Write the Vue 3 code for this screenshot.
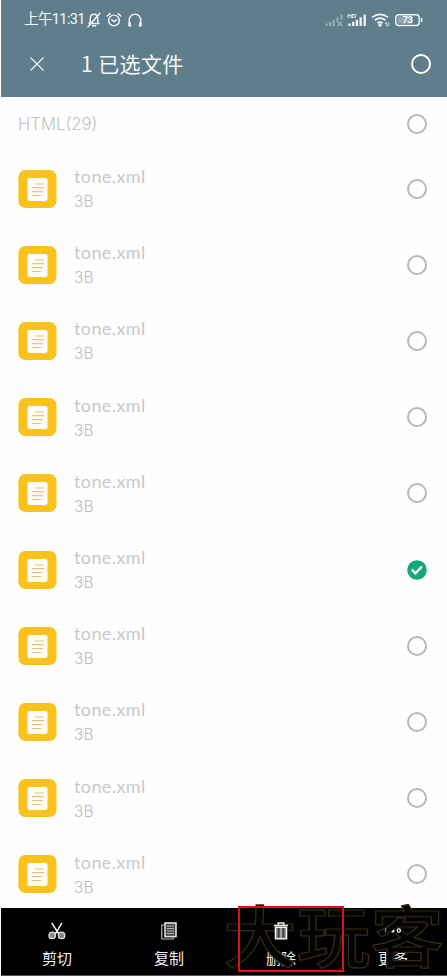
<script setup>
const files = Array.from({ length: 10 }, (_, i) => ({ name: 'tone.xml', size: '3B', checked: i === 5 }))
</script>

<template>
  <main class="screen">
    <header class="top">
      <div class="status">
        <span class="time">上午11:31</span>
        <svg class="bell" width="14" height="16" viewBox="0 0 14 16">
          <path d="M2 11.5h10L10.7 9.7V6.2Q10.7 2.2 7 2.2T3.3 6.2v3.5zM5.3 13.7h3.4M13 1.2 1 14.8" />
        </svg>
        <svg class="alarm" width="16" height="16" viewBox="0 0 16 16">
          <circle cx="8" cy="8.5" r="5.4" /><path d="M5.7 7.8 8 9.6l2.6-1.8M1.2 4 4 1.6M14.8 4 12 1.6" />
        </svg>
        <svg class="phones" width="16" height="16" viewBox="0 0 16 16">
          <path d="M3.8 13.7H2.2V8a5.8 5.8 0 0 1 11.6 0v5.7h-1.6" /><path class="thick" d="M2.7 10.7v2.8M13.3 10.7v2.8" />
        </svg>
        <svg class="signals" width="100" height="16" viewBox="0 0 100 16">
          <g class="dim">
            <path d="M1.5 11.4V14M5 9.8V14M8.7 7.8V14M12.4 5.4v4M16.5 2.8v5" />
            <path class="thin" d="m12.3 9.5 5 4.7m0-4.7-5 4.7" />
          </g>
          <text x="22.2" y="6.4">HD</text>
          <path class="bars" d="M24.5 11.4V14M28.2 9.7V14M31.9 7.8V14M35.6 5.3V14M39.7 2.5V14" />
          <path class="wifi" d="M47.1 5.4q8-6 16 0M49.8 8.2q5.3-4 10.6 0M52.5 11q2.6-1.9 5.2 0" />
          <circle cx="55" cy="13" r="1" fill="#eff5f7" />
          <path class="arrows" d="m59.8 11.5 2-1v3.4m2-3.2v2.7l-2.2.7" />
          <rect x="70.8" y="2.7" width="23.4" height="10.8" rx="3" />
          <rect class="charge" x="72.5" y="4.5" width="15.5" height="7.3" rx="1" />
          <text class="percent" x="77.4" y="11.2">73</text>
          <path class="tip" d="M96.6 6v4" />
        </svg>
      </div>
      <div class="heading">
        <svg class="close" width="16" height="16" viewBox="0 0 16 16"><path d="m1.5 1.5 13 13m0-13-13 13" /></svg>
        <h1>1 已选文件</h1>
        <i class="ring light"></i>
      </div>
    </header>

    <section class="list">
      <div class="group"><span>HTML(29)</span><i class="ring"></i></div>
      <article v-for="(file, i) in files" :key="i" class="file">
        <svg class="doc" width="39" height="38" viewBox="0 0 39 38">
          <rect x=".4" width="38.1" height="38" rx="7" fill="#f9c21c" />
          <rect x="9.5" y="8" width="20" height="23" rx="2.2" fill="#fffefa" />
          <path d="M16.5 14H26M13.7 17.7H26M13.7 21.7H25M13.7 25.5h9.8" />
        </svg>
        <div class="info"><div class="name">{{ file.name }}</div><div class="size">{{ file.size }}</div></div>
        <svg v-if="file.checked" class="check" width="20" height="20" viewBox="0 0 20 20">
          <circle cx="10" cy="10" r="9.8" /><path d="m4.8 9.6 3.6 3.7 6.5-6.6" />
        </svg>
        <i v-else class="ring"></i>
      </article>
    </section>

    <footer class="actions">
      <div class="action">
        <svg width="18" height="18" viewBox="0 0 18 18">
          <path d="M3.7 .8 10.8 12M14 .8 7.2 12" stroke="#f2f2f2" stroke-width="1.5" />
          <circle cx="4.2" cy="13.4" r="3.2" fill="#888" stroke="#ddd" stroke-width="1.3" />
          <circle cx="13.6" cy="13.4" r="3.2" fill="#888" stroke="#ddd" stroke-width="1.3" />
        </svg>
        <span>剪切</span>
      </div>
      <div class="action">
        <svg width="18" height="18" viewBox="0 0 18 18" fill="none">
          <path d="M4 3H1.8v14h11.5v-1.6" stroke="#bbb" stroke-width="1.2" />
          <rect x="5" y="1" width="11" height="13.6" fill="#454545" stroke="#e2e2e2" stroke-width="1.6" />
          <path d="M7 4h7M7 6.5h7M7 9h7M7 11.5h7" stroke="#bbb" stroke-width="1.2" />
        </svg>
        <span>复制</span>
      </div>
      <div class="action">
        <svg class="above" width="18" height="18" viewBox="0 0 18 18" fill="none" stroke="#eee">
          <path d="M2 3.5h14M6.2 3V1h5.6v2" stroke-width="1.5" />
          <path d="M3.5 5.2h11v11.5h-11z" fill="#777" stroke-width="1.6" />
          <path d="M6.8 6v9.5m4.4-9.5v9.5" stroke="#222" stroke-width="1" /><path d="M9 6v10" stroke="#ccc" />
        </svg>
        <span>删除</span>
      </div>
      <div class="action">
        <svg class="above" width="18" height="18" viewBox="0 0 18 18" fill="none" stroke="#eee" stroke-width="1.3">
          <path d="M2.7 6Q.3 8 2 10.4" stroke="#777" /><path d="M7.7 9.5q2 .6 2-1.8" stroke-width="1.8" /><circle cx="14.8" cy="8.4" r="1.6" />
        </svg>
        <span>更多</span>
      </div>
      <svg class="watermark" width="226" height="77" viewBox="0 0 226 77">
        <text transform="translate(2 64) scale(1.1 1)">大玩客</text>
      </svg>
      <div class="highlight"></div>
    </footer>
  </main>
</template>

<style>
body { margin: 0; background: #fff; }
</style>

<style scoped>
.screen {
  width: 447px; height: 977px; box-sizing: border-box; padding-left: 1px;
  overflow: hidden; display: flex; flex-direction: column; background: #fefefe;
  font-family: "Noto Sans CJK SC", sans-serif;
}
.top { height: 97px; flex: none; background: #607d8b; color: #f4f9fb; }
.status { height: 39px; display: flex; align-items: center; padding-left: 23px; box-sizing: border-box; }
.time { width: 61px; font-family: Roboto, "Noto Sans CJK SC", sans-serif; font-size: 14.5px; line-height: 20px; letter-spacing: -.6px; white-space: nowrap; padding-top: 1px; }
.status svg { flex: none; fill: none; stroke: #eff5f7; stroke-width: 1.4; stroke-linecap: round; stroke-linejoin: round; }
.bell { margin-left: 2px; }
.alarm { margin-left: 5px; }
.phones { margin-left: 5px; }
.phones .thick { stroke-width: 2.2; }
.status .signals { margin-left: auto; margin-right: 22px; stroke-linecap: butt; }
.signals .dim { stroke: #9db1ba; stroke-width: 2; }
.signals .thin { stroke-width: 1.4; }
.signals .bars { stroke-width: 2.3; }
.signals .wifi { stroke-width: 1.8; }
.signals .arrows { stroke-width: .8; }
.signals .tip { stroke-width: 1.5; }
.signals .charge { fill: #91a6b0; stroke: none; }
.signals text { fill: #fff; stroke: none; font: 700 6px Lato, sans-serif; }
.signals .percent { font-size: 9px; }
.heading { height: 50px; display: flex; align-items: center; padding: 0 16px 0 28px; }
.close { fill: none; stroke: #e9f0f3; stroke-width: 1.2; }
h1 { margin: 0 auto 3px 36px; font-size: 21px; line-height: 30px; font-weight: 400; letter-spacing: .4px; }
.ring { flex: none; width: 20px; height: 20px; border: 2px solid #b7b7b7; border-radius: 50%; box-sizing: border-box; }
.ring.light { border-color: #fff; }
.list { height: 811px; flex: none; color: #c9c9c9; font-family: Lato, "Noto Sans", sans-serif; }
.group { height: 53.5px; display: flex; align-items: center; justify-content: space-between; padding: 0 20.5px 0 17px; font-size: 17px; color: #c3c3c3; }
.group span { font-family: Inter, sans-serif; font-weight: 300; font-size: 16.7px; }
.file { height: 76.2px; display: flex; align-items: center; padding: 0 20.5px 0 17px; }
.doc { flex: none; }
.doc path { fill: none; stroke: #e8c27c; stroke-width: 1.2; }
.info { margin: 1px auto 0 17px; }
.name { font-size: 18px; line-height: 25px; letter-spacing: .4px; }
.size { font-family: Inter, sans-serif; font-weight: 300; font-size: 15.5px; line-height: 25px; color: #bdbdbd; }
.check { fill: #14a873; }
.check path { fill: none; stroke: #fff; stroke-width: 2.4; }
.actions { position: relative; height: 67px; flex: none; display: flex; background: #000; color: #efefef; border-bottom: 1px solid #555; }
.action { width: 112px; flex: none; display: flex; flex-direction: column; align-items: center; padding-top: 14px; box-sizing: border-box; }
.action .above { position: relative; z-index: 2; }
.action span { margin-top: 7px; font-size: 15px; line-height: 22px; }
.highlight { position: absolute; left: 237px; top: -2px; width: 106px; height: 66px; box-sizing: border-box; border: 2px solid #dc1119; }
.watermark { position: absolute; left: 220px; top: -10px; }
.watermark text { font: 500 67px "Noto Sans CJK SC", sans-serif; fill: #030302; stroke: #352d12; stroke-width: 1.2; stroke-linejoin: round; }
</style>
